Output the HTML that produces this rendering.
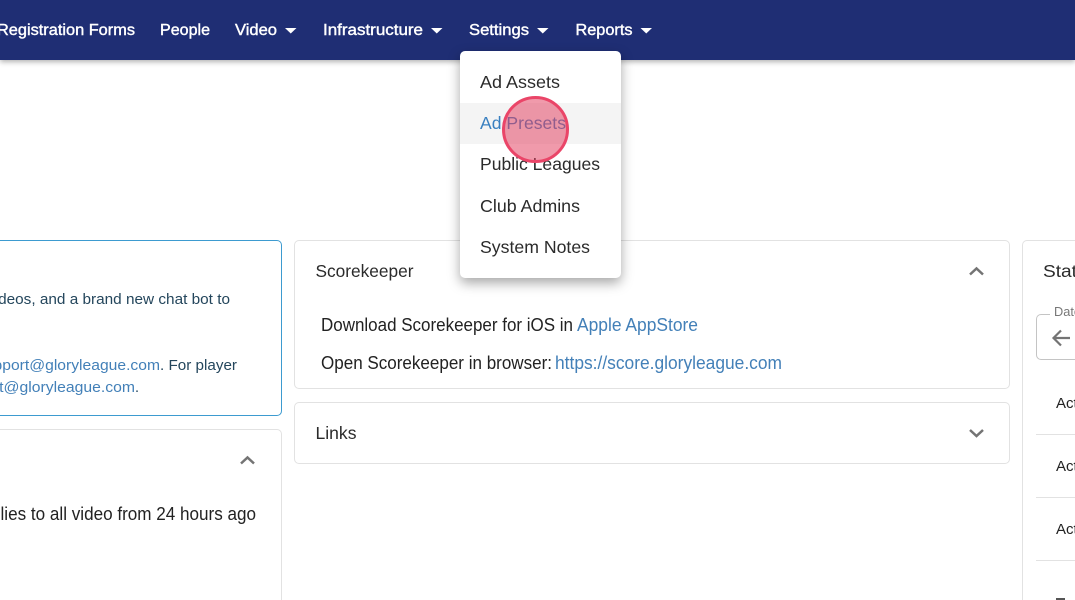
<!DOCTYPE html>
<html lang="en">
<head>
<meta charset="utf-8">
<title>Glory League</title>
<style>
html,body{margin:0;padding:0;width:1075px;height:600px;overflow:hidden;background:#fff}
body{position:relative;font-family:"Liberation Sans",sans-serif}
.nav{position:absolute;left:0;top:0;width:1075px;height:60px;background:#1f2e74;box-shadow:0 2px 5px rgba(0,0,0,.3)}
.card{position:absolute;box-sizing:border-box;background:#fff;border:1px solid #e2e2e2;border-radius:5px}
.menu{position:absolute;left:460px;top:51px;width:161px;height:227px;background:#fff;border-radius:5px;box-shadow:0 5px 12px rgba(0,0,0,.35)}
.hover{position:absolute;left:0;top:52px;width:161px;height:41px;background:#f4f4f4}
.dot{position:absolute;left:502px;top:96px;width:67px;height:67px;box-sizing:border-box;border-radius:50%;background:rgba(226,62,94,.52);border:3px solid #ea4568}
.date{position:absolute;left:1036px;top:314px;width:39px;height:46px;box-sizing:border-box;border:1px solid #c4c4c4;border-right:none;border-radius:5px 0 0 5px}
.legend{position:absolute;left:1050px;top:308px;width:25px;height:12px;background:#fff}
.rule{position:absolute;left:1036px;width:39px;height:1px;background:#e2e2e2}
svg.layer{position:absolute;left:0;top:0;overflow:hidden}
</style>
</head>
<body>
<div class="nav"></div>
<div class="card" style="left:0;top:240px;width:282px;height:176px;border-color:#3d9bd0;border-left:none;border-radius:0 5px 5px 0"></div>
<div class="card" style="left:0;top:429px;width:282px;height:171px;border-left:none;border-bottom:none;border-radius:0 5px 0 0"></div>
<div class="card" style="left:294px;top:240px;width:716px;height:149px"></div>
<div class="card" style="left:294px;top:402px;width:716px;height:62px"></div>
<div class="card" style="left:1022px;top:240px;width:53px;height:360px;border-right:none;border-bottom:none;border-radius:5px 0 0 0"></div>
<div class="date"></div>
<div class="legend"></div>
<div class="rule" style="top:434px"></div>
<div class="rule" style="top:497px"></div>
<div class="rule" style="top:560px"></div>

<svg class="layer" width="1075" height="600" viewBox="0 0 1075 600" font-family="'Liberation Sans',sans-serif">
  <g font-size="14.5">
    <text x="-13" y="304" textLength="243" lengthAdjust="spacingAndGlyphs" fill="#24465c">videos, and a brand new chat bot to</text>
    <text x="-23" y="370" textLength="183" lengthAdjust="spacingAndGlyphs" fill="#4380b8">support@gloryleague.com</text>
    <text x="160" y="370" textLength="77" lengthAdjust="spacingAndGlyphs" fill="#24465c">. For player</text>
    <text x="-49" y="392" textLength="184" lengthAdjust="spacingAndGlyphs" fill="#4380b8">support@gloryleague.com</text>
    <text x="135" y="392" fill="#24465c">.</text>
  </g>
  <text x="-28" y="520" font-size="18" fill="#222" textLength="284" lengthAdjust="spacingAndGlyphs">applies to all video from 24 hours ago</text>
  <g font-size="17.5" fill="#2b2b2b">
    <text x="315.500" y="277" textLength="98" lengthAdjust="spacingAndGlyphs">Scorekeeper</text>
    <text x="315.500" y="439" textLength="41" lengthAdjust="spacingAndGlyphs">Links</text>
    <text x="1043" y="277" textLength="34" lengthAdjust="spacingAndGlyphs">Stat</text>
  </g>
  <g font-size="18" fill="#222">
    <text x="321" y="331" textLength="252" lengthAdjust="spacingAndGlyphs">Download Scorekeeper for iOS in</text>
    <text x="577" y="331" textLength="121" lengthAdjust="spacingAndGlyphs" fill="#4380b8">Apple AppStore</text>
    <text x="321" y="369" textLength="231" lengthAdjust="spacingAndGlyphs">Open Scorekeeper in browser:</text>
    <text x="555" y="369" textLength="227" lengthAdjust="spacingAndGlyphs" fill="#4380b8">https://score.gloryleague.com</text>
  </g>
  <text x="1054" y="316" font-size="12.5" fill="#777" textLength="27" lengthAdjust="spacingAndGlyphs">Date</text>
  <g font-size="15" fill="#222">
    <text x="1056" y="408">Active</text>
    <text x="1056" y="471">Active</text>
    <text x="1056" y="534">Active</text>
  </g>
  <rect x="1056" y="598" width="9" height="2" fill="#555"/>
  <g fill="none" stroke="#747474" stroke-width="2.5">
    <path d="M241 463.500 L247.500 457.500 L254 463.500"/>
    <path d="M970 274.500 L976.500 268.500 L983 274.500"/>
    <path d="M970 430 L976.500 436 L983 430"/>
    <path d="M1070 338 H1054 M1061 330.500 L1053.500 338 L1061 345.500" stroke-width="2.2"/>
  </g>
  <g font-size="15.500" fill="#fff" stroke="#fff" stroke-width=".4">
    <text x="-3" y="35" textLength="138" lengthAdjust="spacingAndGlyphs">Registration Forms</text>
    <text x="160" y="35" textLength="50" lengthAdjust="spacingAndGlyphs">People</text>
    <text x="235" y="35" textLength="42" lengthAdjust="spacingAndGlyphs">Video</text>
    <text x="323" y="35" textLength="100" lengthAdjust="spacingAndGlyphs">Infrastructure</text>
    <text x="469" y="35" textLength="60" lengthAdjust="spacingAndGlyphs">Settings</text>
    <text x="575.500" y="35" textLength="57" lengthAdjust="spacingAndGlyphs">Reports</text>
  </g>
  <g fill="#fff">
    <path d="M285 28 H296.500 L290.750 33.500 Z"/>
    <path d="M431 28 H442.500 L436.750 33.500 Z"/>
    <path d="M537 28 H548.500 L542.750 33.500 Z"/>
    <path d="M640.500 28 H652 L646.250 33.500 Z"/>
  </g>
</svg>

<div class="menu"><div class="hover"></div></div>
<svg class="layer" width="1075" height="600" viewBox="0 0 1075 600" font-family="'Liberation Sans',sans-serif">
  <g font-size="17.5" fill="#2b2b2b">
    <text x="480" y="88" textLength="80" lengthAdjust="spacingAndGlyphs">Ad Assets</text>
    <text x="480" y="129" textLength="86" lengthAdjust="spacingAndGlyphs" fill="#3a80c0">Ad Presets</text>
    <text x="480" y="170" textLength="120" lengthAdjust="spacingAndGlyphs">Public Leagues</text>
    <text x="480" y="212" textLength="100" lengthAdjust="spacingAndGlyphs">Club Admins</text>
    <text x="480" y="253" textLength="110" lengthAdjust="spacingAndGlyphs">System Notes</text>
  </g>
</svg>
<div class="dot"></div>
</body>
</html>
